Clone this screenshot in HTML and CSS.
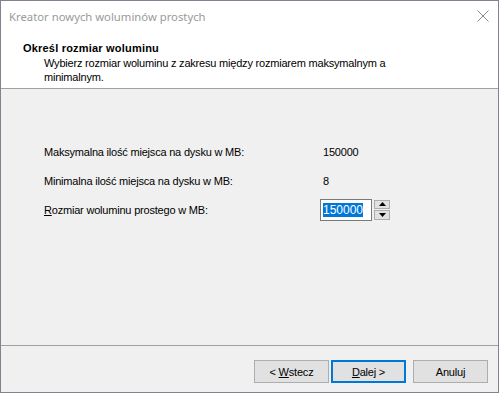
FILE: index.html
```html
<!DOCTYPE html>
<html lang="pl">
<head>
  <meta charset="UTF-8" />
  <title>Kreator nowych woluminów prostych</title>
  <link rel="stylesheet" href="styles.css">
</head>
<body>

  <div class="window">
    <div class="titlebar">
      <span class="title">Kreator nowych woluminów prostych</span>
      <svg class="close" width="12" height="12" viewBox="0 0 12 12">
        <path d="M0.5 0.5 L11.5 11.5 M11.5 0.5 L0.5 11.5" stroke="#8a8a8a" stroke-width="1" fill="none"/>
      </svg>
    </div>

    <div class="header">
      <div class="heading">Określ rozmiar woluminu</div>
      <div class="subheading">Wybierz rozmiar woluminu z zakresu między rozmiarem maksymalnym a<br>minimalnym.</div>
    </div>

    <div class="content">
      <div class="grid">
        <div class="label">Maksymalna ilość miejsca na dysku w MB:</div>
        <div class="value">150000</div>

        <div class="label">Minimalna ilość miejsca na dysku w MB:</div>
        <div class="value">8</div>

        <div class="label"><u>R</u>ozmiar woluminu prostego w MB:</div>
        <div class="spinner">
          <div class="field"><span class="selected">150000</span></div>
          <div class="arrows">
            <div class="arrow">
              <svg width="7" height="4" viewBox="0 0 7 4"><path d="M3.5 0 L7 4 L0 4 Z" fill="#000"/></svg>
            </div>
            <div class="arrow">
              <svg width="7" height="4" viewBox="0 0 7 4"><path d="M0 0 L7 0 L3.5 4 Z" fill="#000"/></svg>
            </div>
          </div>
        </div>
      </div>
    </div>

    <div class="footer">
      <button class="btn">&lt; <u>W</u>stecz</button>
      <button class="btn default"><u>D</u>alej &gt;</button>
      <button class="btn cancel">Anuluj</button>
    </div>
  </div>

</body>
</html>
```

FILE: styles.css
```css
* {
  box-sizing: border-box;
}

body {
  margin: 0;
  font-family: 'Liberation Sans', Arial, sans-serif;
  font-size: 11px;
  letter-spacing: -0.2px;
  color: #000;
}

.window {
  width: 499px;
  height: 393px;
  border: 1px solid #85808f;
  display: flex;
  flex-direction: column;
  background: #fff;
}

.titlebar {
  height: 30px;
  display: flex;
  align-items: center;
  justify-content: space-between;
  padding: 0 9px 0 8px;
}

.title {
  font-family: 'Noto Sans', 'Liberation Sans', sans-serif;
  font-size: 11.3px;
  letter-spacing: 0;
  color: #9a9a9a;
}

.header {
  height: 58px;
  padding: 10px 0 0 22px;
  border-bottom: 1px solid #a0a0a0;
}

.heading {
  font-weight: bold;
  font-size: 11px;
  letter-spacing: 0.2px;
  line-height: 15px;
}

.subheading {
  line-height: 14px;
  margin-left: 21px;
}

.content {
  flex: 1;
  background: #f0f0f0;
  padding: 48px 0 0 43px;
}

.grid {
  display: grid;
  grid-template-columns: 276px auto;
  grid-auto-rows: 29px;
  align-items: center;
}

.value {
  padding-left: 3px;
}

.spinner {
  display: flex;
  gap: 2px;
  height: 22px;
}

.field {
  width: 52px;
  height: 22px;
  border: 1px solid #7a7a7a;
  background: #fff;
  padding: 3px 0 0 2px;
  line-height: 14px;
}

.selected {
  background: #0078d7;
  color: #fff;
  font-size: 12px;
  letter-spacing: 0;
}

.arrows {
  display: flex;
  flex-direction: column;
  gap: 1px;
  padding: 1px 0;
}

.arrow {
  width: 16px;
  flex: 1;
  background: #e1e1e1;
  border: 1px solid #adadad;
  display: flex;
  align-items: center;
  justify-content: center;
}

.footer {
  height: 47px;
  background: #f0f0f0;
  border-top: 1px solid #a0a0a0;
  display: flex;
  justify-content: flex-end;
  align-items: flex-start;
  padding: 14px 10px 0 0;
  gap: 2px;
}

.btn {
  width: 75px;
  height: 23px;
  font-family: 'Liberation Sans', Arial, sans-serif;
  font-size: 11px;
  letter-spacing: -0.2px;
  color: #000;
  background: #e1e1e1;
  border: 1px solid #adadad;
  padding: 0;
}

.btn.default {
  border: 2px solid #0078d7;
}

.btn.cancel {
  margin-left: 5px;
}
```
